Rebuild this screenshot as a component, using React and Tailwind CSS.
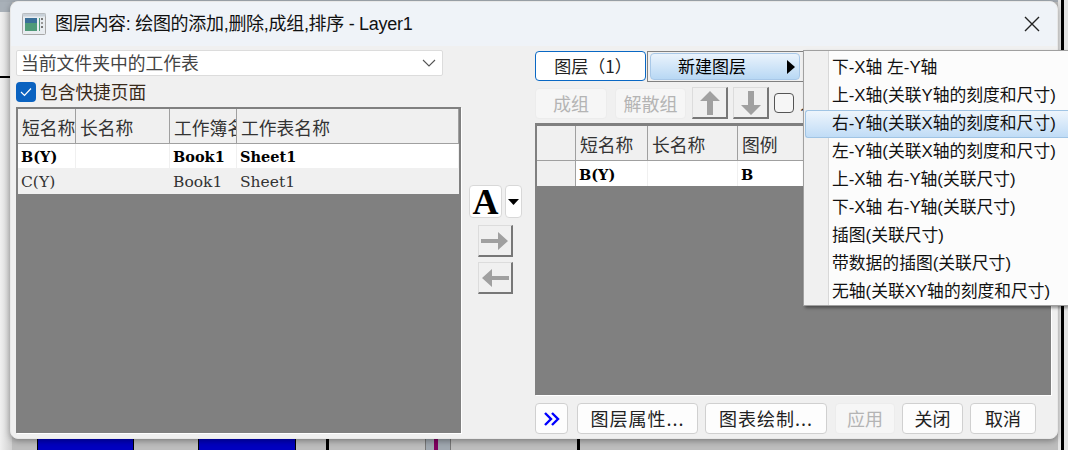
import React from "react";

const sans = "font-['Noto_Sans_CJK_SC','Liberation_Sans',sans-serif]";
const ui = "font-['Liberation_Sans','Noto_Sans_CJK_SC',sans-serif]";
const serif = "font-['DejaVu_Serif','Noto_Sans_CJK_SC',serif]";

function HeaderCell({ w, children }) {
  return (
    <div className={`${w} h-full shrink-0 overflow-hidden whitespace-nowrap border-r border-[#a0a0a0] pl-[4px] text-[17.8px] leading-[37px] text-[#333] ${sans}`}>
      {children}
    </div>
  );
}

function Cell({ w, bold, children }) {
  return (
    <div className={`${w} h-full shrink-0 overflow-hidden whitespace-nowrap border-r pl-[3px] ${serif} ${bold ? "border-[#f0f0f0] pt-[1px] text-[14.5px] font-bold text-black" : "border-transparent pt-[1px] text-[15.5px] text-[#333]"}`}>
      {children}
    </div>
  );
}

function ArrowBtn({ children, className }) {
  return (
    <div className={`flex items-center justify-center border-2 border-l border-t border-[#dcdcdc] border-b-[#777] border-r-[#777] bg-[#f0f0f0] ${className}`}>
      {children}
    </div>
  );
}

function Btn({ w, disabled, children, className = "" }) {
  return (
    <div className={`${w} flex h-[31px] shrink-0 items-center justify-center rounded-[4px] border text-[18px] ${sans} ${disabled ? "border-[#ececec] bg-[#f6f6f6] text-[#b4b4b4]" : "border-[#d0d0d0] bg-[#fdfdfd] text-[#222]"} ${className}`}>
      {children}
    </div>
  );
}

const menu = [
  "下-X轴 左-Y轴",
  "上-X轴(关联Y轴的刻度和尺寸)",
  "右-Y轴(关联X轴的刻度和尺寸)",
  "左-Y轴(关联X轴的刻度和尺寸)",
  "上-X轴 右-Y轴(关联尺寸)",
  "下-X轴 右-Y轴(关联尺寸)",
  "插图(关联尺寸)",
  "带数据的插图(关联尺寸)",
  "无轴(关联XY轴的刻度和尺寸)",
];

export default function App() {
  return (
    <div className="relative h-[450px] w-[1068px] overflow-hidden bg-[#bdbdbd]">
      {/* desktop behind the dialog */}
      <div className="absolute left-0 top-0 h-[450px] w-[12px] bg-gradient-to-r from-[#f0f0f0] to-[#cfcfcf]" />
      <div className="absolute left-0 top-0 h-[12px] w-[12px] bg-[#a8b0b8]" />
      <div className="absolute left-0 top-0 h-[2px] w-[1068px] bg-[#a4acb4]" />
      <div className="absolute left-0 top-[76px] h-[2px] w-[12px] bg-black" />
      <div className="absolute right-0 top-0 h-[450px] w-[10px] bg-[#e4e4e4]" />
      <div className="absolute left-[1061px] top-0 h-[450px] w-[3px] bg-black" />
      <div className="absolute left-[37px] top-[439px] h-[11px] w-[97px] border-x border-black bg-[#0000c0]" />
      <div className="absolute left-[198px] top-[439px] h-[11px] w-[98px] border-x border-black bg-[#0000c0]" />
      <div className="absolute left-[326px] top-[439px] h-[11px] w-[3px] bg-black" />
      <div className="absolute left-[425px] top-[439px] h-[11px] w-[26px] border-x border-[#777] bg-[#a0a8b0]" />
      <div className="absolute left-[434px] top-[439px] h-[11px] w-[4px] bg-[#800060]" />
      <div className="absolute left-[577px] top-[439px] h-[11px] w-[3px] bg-black" />

      <div className="relative pl-[10px] pt-[1px]">
        <div className="flex h-[438px] w-[1048px] flex-col overflow-hidden rounded-[8px] border border-[#e8e8e8] bg-[#f0f0f0] shadow-[0_2px_6px_rgba(0,0,0,0.35)]">
          {/* title bar */}
          <div className="flex h-[44px] shrink-0 items-center bg-[#eff3f8] pl-[11px] pr-[17px]">
            <svg width="24" height="22" viewBox="0 0 24 22" className="shrink-0">
              <rect x="0.5" y="0.5" width="23" height="21" rx="1" fill="#e8ecf0" stroke="#a8a8a8" />
              <rect x="0.5" y="0.5" width="23" height="3" fill="#c8d0d8" />
              <rect x="3" y="5" width="12" height="13" fill="#4f9a78" />
              <rect x="3" y="5" width="12" height="5" fill="#3a6f98" />
              <rect x="17" y="5" width="1" height="13" fill="#4f9a78" />
              <rect x="19" y="5" width="2" height="2" fill="#777" />
              <rect x="19" y="9" width="2" height="2" fill="#999" />
              <rect x="19" y="13" width="2" height="2" fill="#777" />
            </svg>
            <div className={`ml-[9px] text-[18px] leading-none tracking-[-0.3px] text-[#111] ${ui}`}>
              图层内容: 绘图的添加,删除,成组,排序 - Layer1
            </div>
            <svg width="16" height="16" viewBox="0 0 16 16" className="ml-auto">
              <path d="M1 1 L15 15 M15 1 L1 15" stroke="#222" strokeWidth="1.4" fill="none" />
            </svg>
          </div>

          <div className="flex min-h-0 flex-1 pl-[5px] pt-[4px]">
            {/* left column */}
            <div className="flex w-[446px] shrink-0 flex-col">
              <div className={`flex h-[26px] w-[427px] items-center rounded-[2px] border border-[#dcdcdc] bg-white pl-[4px] pr-[6px] text-[17.8px] leading-[24px] text-[#444] ${sans}`}>
                <span className="-mt-[2px]">当前文件夹中的工作表</span>
                <svg width="14" height="8" viewBox="0 0 14 8" className="ml-auto">
                  <path d="M1 1 L7 7 L13 1" stroke="#555" strokeWidth="1.1" fill="none" />
                </svg>
              </div>
              <div className="mt-[5px] flex h-[21px] items-center">
                <div className="flex h-[20px] w-[20px] items-center justify-center rounded-[4px] bg-[#0a62c0]">
                  <svg width="12" height="10" viewBox="0 0 12 10">
                    <path d="M1 5 L4.5 8.5 L11 1.5" stroke="#fff" strokeWidth="1.2" fill="none" />
                  </svg>
                </div>
                <div className={`ml-[4px] text-[17.7px] text-[#3a2a1a] ${sans}`}>包含快捷页面</div>
              </div>
              <div className="mt-[5px] flex h-[326px] w-[445px] flex-col border-2 border-[#808080] bg-[#808080] shadow-[1px_1px_0_#fff]">
                <div className="flex h-[35px] shrink-0 border-b border-[#a0a0a0] bg-[#f0f0f0]">
                  <HeaderCell w="w-[58px]">短名称</HeaderCell>
                  <HeaderCell w="w-[94px]">长名称</HeaderCell>
                  <HeaderCell w="w-[67px]">工作簿名称</HeaderCell>
                  <HeaderCell w="flex-1">工作表名称</HeaderCell>
                </div>
                <div className="flex h-[24px] shrink-0 bg-white leading-[24px]">
                  <Cell w="w-[58px]" bold>B(Y)</Cell>
                  <Cell w="w-[94px]" bold></Cell>
                  <Cell w="w-[67px]" bold>Book1</Cell>
                  <Cell w="flex-1" bold>Sheet1</Cell>
                </div>
                <div className="flex h-[26px] shrink-0 bg-[#f0f0f0] leading-[26px]">
                  <Cell w="w-[58px]">C(Y)</Cell>
                  <Cell w="w-[94px]"></Cell>
                  <Cell w="w-[67px]">Book1</Cell>
                  <Cell w="flex-1">Sheet1</Cell>
                </div>
              </div>
            </div>

            {/* centre column */}
            <div className="flex w-[73px] shrink-0 flex-col items-center pr-[6px] pt-[135px]">
              <div className="flex w-[53px] gap-[3px]">
                <div className="flex h-[33px] w-[33px] items-center justify-center rounded-[4px] border border-[#d8d8d8] bg-white font-['Liberation_Serif',serif] text-[36px] font-bold leading-none text-black">
                  A
                </div>
                <div className="flex h-[33px] w-[17px] items-center justify-center rounded-[4px] border border-[#d8d8d8] bg-white">
                  <svg width="11" height="6" viewBox="0 0 11 6"><path d="M0 0 H11 L5.5 6 Z" fill="#000" /></svg>
                </div>
              </div>
              <ArrowBtn className="mt-[7px] h-[32px] w-[35px]">
                <svg width="28" height="18" viewBox="0 0 28 18"><path d="M0 7 H17 V0 L27 9 L17 18 V11 H0 Z" fill="#a0a0a0" /></svg>
              </ArrowBtn>
              <ArrowBtn className="mt-[5px] h-[32px] w-[35px]">
                <svg width="28" height="18" viewBox="0 0 28 18"><path d="M28 7 H11 V0 L1 9 L11 18 V11 H28 Z" fill="#a0a0a0" /></svg>
              </ArrowBtn>
            </div>

            {/* right column */}
            <div className="flex w-[516px] shrink-0 flex-col">
              <div className="flex h-[32px] items-center">
                <div className={`flex h-[30px] w-[111px] items-center justify-center rounded-[4px] border border-[#0a68c4] bg-white pl-[5px] text-[17px] text-[#222] ${sans}`}>
                  图层（1）
                </div>
                <div className="ml-[1px] flex h-[31px] w-[200px] items-center border border-r-0 border-[#808080] pl-[2px]">
                  <div className={`relative flex h-[27px] w-[150px] items-center justify-center rounded-[4px] border border-[#a8c8e8] bg-gradient-to-b from-[#eaf3fc] to-[#b8d8f4] pr-[26px] text-[17px] text-black ${sans}`}>
                    新建图层
                    <svg width="8" height="14" viewBox="0 0 8 14" className="absolute right-[4px] top-[6px]"><path d="M0 0 L8 7 L0 14 Z" fill="#000" /></svg>
                  </div>
                </div>
              </div>
              <div className="mt-[5px] flex h-[32px] items-center">
                <Btn w="w-[72px]" disabled className="h-[29px]">成组</Btn>
                <Btn w="w-[71px]" disabled className="ml-[8px] h-[29px]">解散组</Btn>
                <ArrowBtn className="ml-[6px] h-[32px] w-[36px]">
                  <svg width="20" height="24" viewBox="0 0 20 24"><path d="M7 24 V10 H0 L10 0 L20 10 H13 V24 Z" fill="#a0a0a0" /></svg>
                </ArrowBtn>
                <ArrowBtn className="ml-[5px] h-[32px] w-[36px]">
                  <svg width="20" height="24" viewBox="0 0 20 24"><path d="M7 0 V14 H0 L10 24 L20 14 H13 V0 Z" fill="#a0a0a0" /></svg>
                </ArrowBtn>
                <div className="ml-[5px] h-[20px] w-[20px] shrink-0 rounded-[4px] border border-[#555] bg-[#f6f6f6]" />
                <span className={`ml-[6px] text-[17px] text-[#333] ${sans}`}>人</span>
              </div>
              <div className="mt-[4px] flex h-[272px] w-[516px] flex-col border-2 border-t-[3px] border-[#808080] bg-[#808080] shadow-[1px_1px_0_#fff]">
                <div className="flex h-[35px] shrink-0 border-b border-[#a0a0a0] bg-[#f0f0f0]">
                  <HeaderCell w="w-[39px]"></HeaderCell>
                  <HeaderCell w="w-[72px]">短名称</HeaderCell>
                  <HeaderCell w="w-[90px]">长名称</HeaderCell>
                  <HeaderCell w="flex-1">图例</HeaderCell>
                </div>
                <div className="flex h-[25px] shrink-0 bg-white leading-[25px]">
                  <div className="h-full w-[39px] shrink-0 border-r border-[#a0a0a0] bg-[#f0f0f0]" />
                  <Cell w="w-[72px]" bold>B(Y)</Cell>
                  <Cell w="w-[90px]" bold></Cell>
                  <Cell w="flex-1" bold>B</Cell>
                </div>
              </div>
              <div className="mt-[8px] flex">
                <Btn w="w-[33px]" className="text-[#0000ff]">
                  <svg width="16" height="14" viewBox="0 0 16 14"><path d="M1 1 L7 7 L1 13 M8 1 L14 7 L8 13" stroke="#0000ff" strokeWidth="2.4" fill="none" /></svg>
                </Btn>
                <Btn w="w-[121px]" className="ml-[9px] tracking-[1px]">图层属性...</Btn>
                <Btn w="w-[122px]" className="ml-[7px] tracking-[1px]">图表绘制...</Btn>
                <Btn w="w-[60px]" disabled className="ml-[8px]">应用</Btn>
                <Btn w="w-[61px]" className="ml-[7px]">关闭</Btn>
                <Btn w="w-[66px]" className="ml-[7px]">取消</Btn>
              </div>
            </div>
          </div>
        </div>
      </div>

      {/* popup menu over the dialog */}
      <div className="absolute left-[803px] top-[50px] flex h-[256px] w-[265px] border border-r-0 border-[#a0a0a0] bg-[#fcfcfc] shadow-[2px_2px_3px_rgba(0,0,0,0.4)]">
        <div className="absolute bottom-0 left-0 top-0 w-[25px] border-r border-[#d8d8d8] bg-[#f0f0f0]" />
        <div className={`relative flex w-full flex-col pt-[3px] text-[16.8px] text-[#111] ${ui}`}>
          {menu.map((m, i) => (
            <div
              key={m}
              className={`flex h-[28px] shrink-0 items-center whitespace-nowrap ${i === 2 ? "ml-[1px] rounded-l-[3px] border border-r-0 border-[#a0c4e4] bg-gradient-to-b from-[#eef5fc] to-[#c0dcf6] pl-[26px]" : "pl-[28px]"}`}
            >
              {m}
            </div>
          ))}
        </div>
      </div>
    </div>
  );
}
